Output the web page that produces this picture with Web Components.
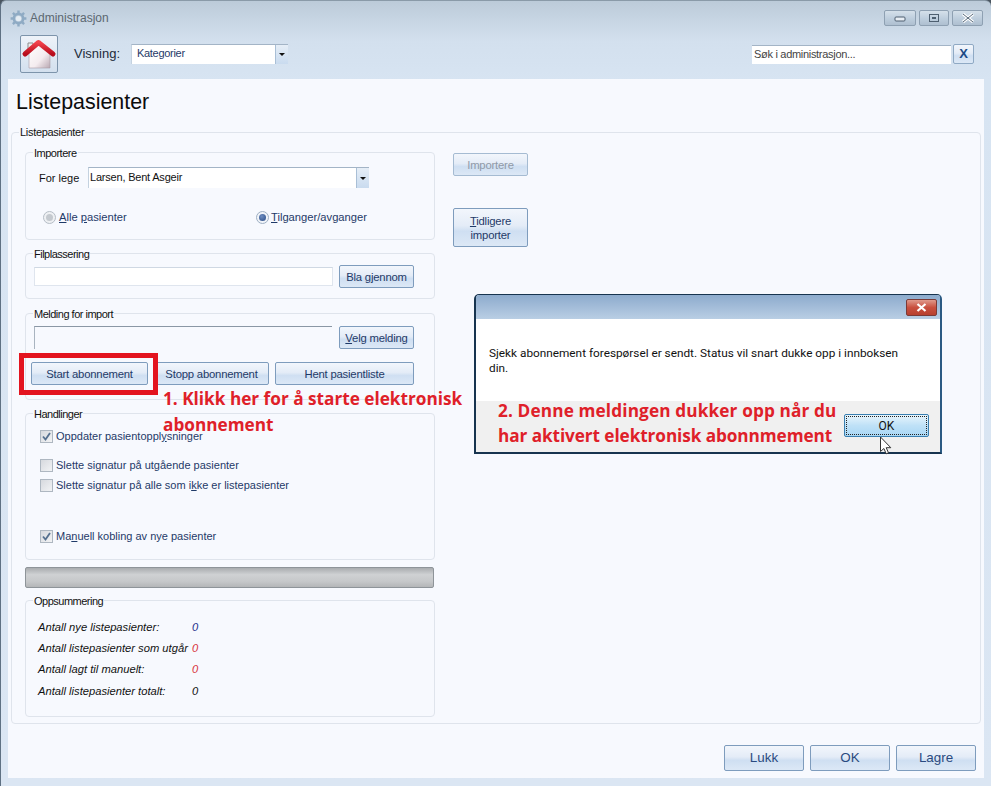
<!DOCTYPE html>
<html lang="no"><head><meta charset="utf-8"><title>Administrasjon</title>
<style>
html,body{margin:0;padding:0;background:#f7f9fe}
body{font:11.2px "Liberation Sans",Arial,sans-serif;color:#1f3a68}
</style></head><body>
<x-app>
  <x-titlebar slot="title">Administrasjon</x-titlebar>
  <x-toolbar slot="tools"></x-toolbar>
  <h1 slot="heading">Listepasienter</h1>

  <x-group outer legend="Listepasienter" style="height:599px" slot="main">
    <div style="display:flex;padding:6px 0 0 13px">
      <div style="width:410px;display:flex;flex-direction:column">
        <x-group legend="Importere" style="height:95px">
          <div style="display:flex;align-items:center;margin:8px 0 0 13px">
            <span style="width:49px;color:#111;font-size:11px">For lege</span>
            <x-combo style="width:281px;height:21px" value="Larsen, Bent Asgeir"></x-combo>
          </div>
          <div style="display:flex;margin:22px 0 0 17px">
            <x-radio style="width:213px" disabled><u>A</u>lle <u>p</u>asienter</x-radio>
            <x-radio checked><u>T</u>ilganger/avganger</x-radio>
          </div>
        </x-group>
        <x-group legend="Filplassering" style="height:53px;margin-top:6px">
          <div style="display:flex;margin:5px 0 0 8px;align-items:center">
            <x-field style="width:299px;height:19px"></x-field>
            <x-btn style="width:75px;height:23px;margin-left:6px">Bla <u>g</u>jennom</x-btn>
          </div>
        </x-group>
        <x-group legend="Melding for import" style="height:94px;margin-top:7px">
          <div style="display:flex;margin:6px 0 0 8px">
            <x-field dark style="width:298px;height:23px"></x-field>
            <x-btn style="width:75px;height:23px;margin-left:7px"><u>V</u>elg melding</x-btn>
          </div>
          <div style="display:flex;margin:13px 0 0 5px;gap:6px">
            <x-btn style="width:117px;height:23px">Start abonnement</x-btn>
            <x-btn style="width:115px;height:23px">Stopp abonnement</x-btn>
            <x-btn style="width:139px;height:23px">Hent pasientliste</x-btn>
          </div>
        </x-group>
        <x-group legend="Handlinger" style="height:154px;margin-top:6px">
          <div style="display:flex;flex-direction:column;margin:9px 0 0 14px">
            <x-check checked>Oppdater pasientoppl<u>y</u>sninger</x-check>
            <x-check style="margin-top:15px">Slette si<u>g</u>natur på utgående pasienter</x-check>
            <x-check style="margin-top:6px">Slette signatur på alle som i<u>k</u>ke er listepasienter</x-check>
            <x-check checked style="margin-top:37px">Ma<u>n</u>uell kobling av nye pasienter</x-check>
          </div>
        </x-group>
        <x-progress style="margin-top:7px"></x-progress>
        <x-group legend="Oppsummering" style="height:124px;margin-top:5px">
          <x-stats style="margin:9px 0 0 12px"></x-stats>
        </x-group>
      </div>
      <div style="display:flex;flex-direction:column;margin-left:18px;padding-top:8px;gap:32px">
        <x-btn disabled style="width:75px;height:23px">Importere</x-btn>
        <x-btn style="width:75px;height:39px"><u>T</u>idligere<br>importer</x-btn>
      </div>
    </div>
  </x-group>

  <div slot="footer" style="display:flex;justify-content:flex-end;gap:6px;margin:21px 5px 0 0">
    <x-btn big style="width:80px;height:26px">Lukk</x-btn>
    <x-btn big style="width:80px;height:26px">OK</x-btn>
    <x-btn big style="width:80px;height:26px">Lagre</x-btn>
  </div>

  <x-dialog slot="over"></x-dialog>
  <x-marker slot="over"></x-marker>
  <x-note slot="over" style="left:163px;top:386px;line-height:26px">1. Klikk her for å starte elektronisk<br>abonnement</x-note>
  <x-note slot="over" style="left:498px;top:398px;line-height:25px"><span style="letter-spacing:.14px">2. Denne meldingen dukker opp når du</span><br><span style="letter-spacing:-.08px">har aktivert elektronisk abonnmement</span></x-note>
  <x-cursor slot="over"></x-cursor>
</x-app>

<script>
function def(name, css, html, extra){
  customElements.define(name, class extends HTMLElement{
    constructor(){super();const r=this.attachShadow({mode:'open'});
      r.innerHTML='<style>'+css+'</style>'+(typeof html==='function'?html(this):html);}
    connectedCallback(){ if(extra) extra(this); }
  });
}
const UI='font-family:"Liberation Sans",Arial,sans-serif;';
const BTN='linear-gradient(#f2f6fc 0%,#e4ecf7 45%,#cfdff2 60%,#dce8f6 100%)';

def('x-app',`
:host{display:block;position:relative;width:991px;height:786px;overflow:hidden;background:#4a5560;${UI}}
.win{height:786px;box-sizing:border-box;display:flex;flex-direction:column;border-radius:6px 6px 0 0;
 background:linear-gradient(#bccbd9 0,#d3e0ee 40px,#d7e4f2 79px,#dbe6f3 100%);border-left:1px solid #5f7183;border-top:1px solid #8a9aa8}
.panel{margin:0 7px 8px 7px;flex:1;background:#f7f9fe;display:flex;flex-direction:column;padding:0 3px}
::slotted(h1){margin:0;height:46px;box-sizing:border-box;padding:11px 0 0 5px;font:400 21.4px/24px "Liberation Sans",Arial,sans-serif;color:#0c0c0c}
`,`<div class="win"><slot name="title"></slot><slot name="tools"></slot>
<div class="panel"><slot name="heading"></slot><slot name="main"></slot><slot name="footer"></slot></div></div><slot name="over"></slot>`);

def('x-titlebar',`
:host{display:flex;align-items:center;height:34px;box-sizing:border-box;padding:0 8px 0 9px;color:#5b6770;font-size:12px}
svg{margin-right:3px}
.ctl{margin-left:auto;display:flex;gap:3px;margin-right:0}
.c{box-sizing:border-box;height:16px;border:1px solid #8ea0b2;border-radius:2px;background:linear-gradient(#d5e0ea,#bfcfde 50%,#aebfd0);display:flex;align-items:center;justify-content:center}
`,`<svg width="17" height="17" viewBox="0 0 17 17"><g fill="none" stroke="#8fabc4"><circle cx="8.5" cy="8.5" r="4.6" stroke-width="2.6"/><path stroke-width="2.4" d="M8.5 .6v2.6M8.5 13.8v2.6M.6 8.5h2.6M13.8 8.5h2.6M2.9 2.9l1.9 1.9M12.2 12.2l1.9 1.9M2.9 14.1l1.9-1.9M12.2 4.8l1.9-1.9"/></g><circle cx="8.5" cy="8.5" r="2.6" fill="#e4ecf3"/></svg><slot></slot>
<div class="ctl">
<div class="c" style="width:32px"><svg width="14" height="8" style="margin:0"><rect x="2" y="3" width="10" height="4" rx="1" fill="#e8eef4" stroke="#4e5f70"/></svg></div>
<div class="c" style="width:30px"><svg width="12" height="10" style="margin:0"><rect x="1.5" y="1.5" width="9" height="7" fill="none" stroke="#4e5f70"/><rect x="4" y="4" width="4" height="2" fill="#4e5f70"/></svg></div>
<div class="c" style="width:31px"><svg width="14" height="10" style="margin:0"><path d="M2 1l10 8M12 1L2 9" stroke="#fff" stroke-width="3"/><path d="M2 1l10 8M12 1L2 9" stroke="#56687a" stroke-width="1"/></svg></div>
</div>`);

def('x-toolbar',`
:host{display:flex;align-items:center;height:44px;box-sizing:border-box;padding:0 17px 6px 19px;color:#333;font-size:13px}
.home{box-sizing:border-box;width:38px;height:38px;border:1px solid #7d94ab;border-radius:2px;background:linear-gradient(#eef3f9,#d3e0ee);display:flex}
.lbl{margin-left:16px;width:57px;color:#1d2b3a;margin-top:-1px}
.combo{width:157px;height:20px;margin-top:-1px}
.search{margin-left:auto;display:flex;align-items:center;gap:2px}
.in{box-sizing:border-box;width:199px;height:19px;background:#fff;border-top:1px solid #a3b4c6;color:#444;font-size:11px;letter-spacing:-.3px;line-height:16px;padding-left:2px;white-space:nowrap}
.x{box-sizing:border-box;width:21px;height:20px;border:1px solid #8fa9c4;border-radius:2px;background:${BTN};color:#1c4a86;font:700 13px/18px "Liberation Sans",Arial,sans-serif;text-align:center}
`,`<div class="home"><svg width="36" height="36" viewBox="0 0 36 36">
<defs><linearGradient id="g" x1="0" y1="0" x2="1" y2="1"><stop offset="0" stop-color="#fff"/><stop offset=".6" stop-color="#f4ecef"/><stop offset="1" stop-color="#b9a8b2"/></linearGradient>
<linearGradient id="r" x1="0" y1="0" x2="0" y2="1"><stop offset="0" stop-color="#f2434c"/><stop offset="1" stop-color="#b80d1c"/></linearGradient></defs>
<path d="M7 7h5v7H7z" fill="#eee" stroke="#8b8b8b"/>
<path d="M8 17L17.5 8 29 17v15H8z" fill="url(#g)" stroke="#a99aa4" stroke-width=".6"/>
<path d="M4 18L17.5 6.5 32 18" fill="none" stroke="url(#r)" stroke-width="5" stroke-linejoin="round" stroke-linecap="round"/></svg></div>
<span class="lbl">Visning:</span><x-combo class="combo" value="Kategorier" navy></x-combo>
<div class="search"><div class="in">Søk i administrasjon...</div><div class="x">X</div></div>`);

def('x-group',`
:host{display:block;box-sizing:border-box;color:#111;flex:none}
fieldset{box-sizing:border-box;height:100%;margin:0;padding:0;border:1px solid #dfe4ec;border-radius:4px;min-width:0}
legend{padding:0 1px;margin-left:7px;font-size:11px;line-height:16px;height:14px;letter-spacing:-.5px}
:host([outer]) > fieldset > legend{line-height:14px;letter-spacing:-.3px}
`,h=>`<fieldset><legend>${h.getAttribute('legend')}</legend><slot></slot></fieldset>`);

def('x-btn',`
:host{display:inline-flex;box-sizing:border-box;flex:none;align-items:center;justify-content:center;text-align:center;border:1px solid #7e9cbd;border-radius:2px;background:${BTN};color:#1f3a68;font-size:11.3px;line-height:14px;letter-spacing:-.2px;white-space:nowrap}
:host([disabled]){color:#8f9aa8;border-color:#a5bbd2}
:host([big]){font-size:13.4px;color:#2a4a80;letter-spacing:0}
`,`<span><slot></slot></span>`);

def('x-combo',`
:host{display:flex;box-sizing:border-box;background:#fff;border-top:1px solid #a3b4c6;border-left:1px solid #c4d2e0;font-size:11px;letter-spacing:-.2px;color:#111}
:host([navy]){color:#1f3a68;letter-spacing:-.3px}
:host([navy]) .v{padding-left:5px}
.v{flex:1;padding:0 0 2px 1px;align-self:center;white-space:nowrap}
.a{width:12px;background:linear-gradient(#e6eef7,#c9dbef);border-left:1px solid #a9bfd6;display:flex;align-items:center;justify-content:center}
.a i{border:3px solid transparent;border-top:3px solid #111;border-bottom:0;display:block}
`,h=>`<div class="v">${h.getAttribute('value')}</div><div class="a"><i></i></div>`);

def('x-field',`
:host{display:block;box-sizing:border-box;flex:none;background:#fff;border:1px solid #dfe5ee;border-top-color:#cfd8e3}
:host([dark]){background:#f7f9fe;border:0;border-top:1px solid #8a97a5;border-left:1px solid #a9b4c0}
`,``);

def('x-radio',`
:host{display:flex;align-items:center;height:14px;color:#1f3a68;font-size:11.2px;white-space:nowrap}
:host([disabled]) .o{border-color:#b5bdc6;background:#eef0f3;margin-right:3px}
:host([disabled]) .d{background:#c4c9cf}
.o{box-sizing:border-box;width:13px;height:13px;border-radius:50%;border:1px solid #9fb0c4;background:#f1f4f9;display:flex;align-items:center;justify-content:center;margin-right:2px}
.d{width:7px;height:7px;border-radius:50%}
:host([checked]) .d{background:radial-gradient(circle at 40% 35%,#6d8cc0,#2b4c86)}
`,`<div class="o"><div class="d"></div></div><span><slot></slot></span>`);

def('x-check',`
:host{display:flex;align-items:center;height:14px;color:#1f3a68;font-size:11px;white-space:nowrap}
.b{box-sizing:border-box;width:13px;height:13px;margin-right:3px;border:1px solid #aeb7c1;background:linear-gradient(135deg,#d6d9de,#f2f3f5);display:flex}
`,h=>`<div class="b">${h.hasAttribute('checked')?'<svg width="11" height="11" viewBox="0 0 11 11"><path d="M2 5.5l2.5 3 4.5-6.5" fill="none" stroke="#55708f" stroke-width="1.8"/></svg>':''}</div><span><slot></slot></span>`);

def('x-progress',`
:host{display:block;box-sizing:border-box;height:21px;width:409px;flex:none;border:1px solid #8e9499;border-radius:2px;background:linear-gradient(#a9acaf,#cfd1d3 35%,#c6c8ca 70%,#b4b6b8)}
`,``);

def('x-stats',`
:host{display:grid;grid-template-columns:154px auto;grid-auto-rows:21.4px;align-items:center;font-style:italic;font-size:11.2px;color:#111;white-space:nowrap}
.b{color:#25308c}.r{color:#d8333c}
`,`<span>Antall nye listepasienter:</span><span class="b">0</span>
<span>Antall listepasienter som utgår</span><span class="r">0</span>
<span>Antall lagt til manuelt:</span><span class="r">0</span>
<span>Antall listepasienter totalt:</span><span>0</span>`);

def('x-dialog',`
:host{position:absolute;left:474px;top:294px;width:468px;height:160px;box-sizing:border-box;border:2px solid #17344f;border-top-width:1px;border-radius:5px 5px 0 0;background:#fff;display:flex;flex-direction:column;font-family:Roboto,"Noto Sans",sans-serif;color:#111;border-right-color:#2b5a83}
.t{height:24px;flex:none;background:linear-gradient(#8dabcd,#b9cee4);display:flex;justify-content:flex-end;align-items:center;padding-right:3px;border-radius:3px 3px 0 0}
.cl{box-sizing:border-box;width:31px;height:17px;border:1px solid #7b3a36;border-radius:2px;background:linear-gradient(#e09a8c,#c9503f 50%,#b7402f);display:flex;align-items:center;justify-content:center}
.m{height:82px;flex:none;box-sizing:border-box;padding:27px 30px 0 13px;font-size:11.8px;line-height:15px}
.f{flex:1;background:#f0f0f0;display:flex;justify-content:flex-end;padding:13px 11px 0 0}
.ok{box-sizing:border-box;width:85px;height:23px;border:1px solid #3a7fb0;border-radius:2px;background:linear-gradient(#e8f5fc,#bfe1f7 50%,#a9d7f5);outline:1px dotted #222;outline-offset:-3px;font-size:12px;line-height:22px;text-align:center;color:#111}
`,`<div class="t"><div class="cl"><svg width="13" height="9"><path d="M2.5 1l8 7M10.5 1l-8 7" stroke="#fff" stroke-width="2.2"/></svg></div></div>
<div class="m">Sjekk abonnement forespørsel er sendt. Status vil snart dukke opp i innboksen din.</div>
<div class="f"><div class="ok">OK</div></div>`);

def('x-marker',`:host{position:absolute;left:19px;top:353px;width:139px;height:42px;box-sizing:border-box;border:5px solid #e3141f}`,``);

def('x-note',`:host{position:absolute;white-space:nowrap;font:700 17.2px "Open Sans","Noto Sans",sans-serif;color:#df2029}`,`<slot></slot>`);

def('x-cursor',`:host{position:absolute;left:879px;top:436px;width:14px;height:20px;display:block}`,
`<svg width="14" height="20" viewBox="0 0 14 20"><path d="M1.5 1v14.5l3.4-3 2.3 5.3 2.3-1-2.3-5.1h4.6z" fill="#fff" stroke="#333" stroke-width="1"/></svg>`);
</script>
</body></html>
